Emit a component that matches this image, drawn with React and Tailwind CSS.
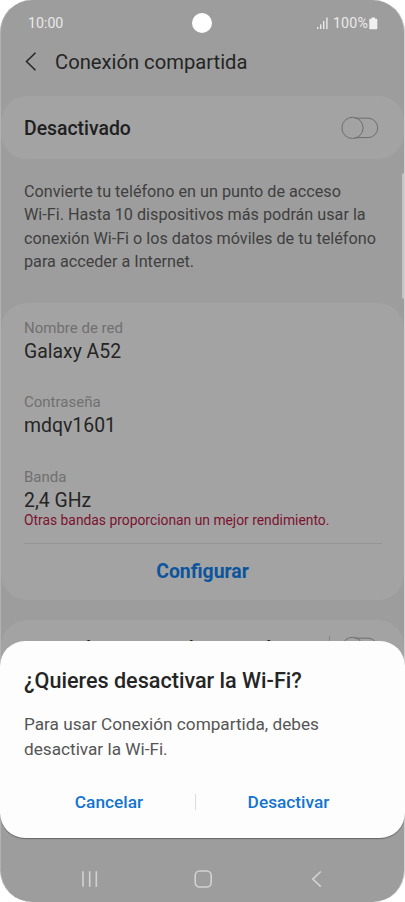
import clsx from 'clsx'

const fields = [
  { label: 'Nombre de red', value: 'Galaxy A52' },
  { label: 'Contraseña', value: 'mdqv1601' },
  { label: 'Banda', value: '2,4 GHz' },
]

function Toggle() {
  return (
    <svg width="38" height="24" viewBox="0 0 38 24" fill="none" stroke="#6e6e6e" strokeWidth="1" className="mr-px">
      <path d="M14 2.2H27a9.7 9.7 0 0 1 0 19.4H14" />
      <circle cx="11.5" cy="11.9" r="10.6" />
    </svg>
  )
}

function StatusBar() {
  return (
    <div className="relative h-[46px] shrink-0 flex items-center justify-between pl-[27px] pt-px pr-[26px] text-[14.200px] text-[#e9e9e9]">
      <span>10:00</span>
      <div className="absolute left-[191px] top-[13px] w-5 h-5 rounded-full bg-white" />
      <div className="flex items-center">
        <svg width="12" height="12" viewBox="0 0 12 12" fill="#e9e9e9" className="mr-[4px]">
          <rect x="0" y="10" width="1.4" height="2" />
          <rect x="3" y="7.4" width="1.4" height="4.6" />
          <rect x="6" y="4" width="1.4" height="8" />
          <rect x="9.2" y="0.5" width="1.4" height="11.5" />
        </svg>
        <span className="pt-px tracking-[0.2px]">100%</span>
        <svg width="9" height="13" viewBox="0 0 9 13" fill="#f0f0f0" className="ml-px">
          <path d="M2.6 0.4h3.4v1.3h1.5q.8 0 .8.8v9q0 .8-.8.8h-6.400q-.8 0-.8-.8v-9q0-.8.8-.8h1.500z" />
        </svg>
      </div>
    </div>
  )
}

function Card({ className, children }) {
  return <div className={clsx('shrink-0 rounded-[26px] bg-[#a3a3a3] pl-[23px]', className)}>{children}</div>
}

function Dialog() {
  return (
    <div className="absolute inset-x-0 top-[641px] h-[197px] rounded-[25px] bg-[#fdfdfd] pl-6 pt-[27px] shadow-[0_1px_1px_rgba(0,0,0,0.35)]">
      <h2 className="text-[21.600px] leading-[26px] font-medium text-[#252525] whitespace-nowrap">¿Quieres desactivar la Wi-Fi?</h2>
      <p className="mt-[18px] text-[17.200px] leading-[25px] text-[#555]">
        Para usar Conexión compartida, debes<br />desactivar la Wi-Fi.
      </p>
      <div className="mt-[28px] flex items-center h-6 text-[17.300px] font-medium text-[#1374d0]">
        <button className="w-[171px] pr-px pt-px text-center">Cancelar</button>
        <span className="w-px h-4 bg-[#dcdcdc]" />
        <button className="w-[185px] pt-px text-center">Desactivar</button>
      </div>
    </div>
  )
}

function NavBar() {
  return (
    <div className="absolute inset-x-0 bottom-0 h-[46px] flex items-center">
      <svg width="405" height="46" viewBox="0 0 405 46" fill="none" stroke="#d2d2d2" strokeWidth="1.6">
        <path d="M83 15.200v15.600M89.700 15.200v15.600M96.300 15.200v15.600" />
        <rect x="195.200" y="15" width="16" height="16" rx="4.500" />
        <path d="M320.800 15.500l-8 7.600 8 7.600" />
      </svg>
    </div>
  )
}

export default function App() {
  return (
    <div className="w-[405px] h-[902px] bg-white font-['Roboto',sans-serif]">
      <div className="relative w-[405px] h-[902px] rounded-[32px] overflow-hidden bg-[#9d9d9d] border-x border-l-[#b2b2b2] border-r-[#d0d0d0] flex flex-col">
        <StatusBar />

        <div className="h-[50px] shrink-0 flex items-start pl-6 pt-[3px]">
          <svg width="12" height="20" viewBox="0 0 12 20" fill="none" stroke="#252525" strokeWidth="1.500" className="mt-[2px]">
            <path d="M10.500 1.700L1.500 10.500l9 8.700" />
          </svg>
          <h1 className="ml-[18px] text-[20.200px] leading-[26px] text-[#252525]">Conexión compartida</h1>
        </div>

        <Card className="h-[63px] pr-6 flex items-center justify-between">
          <span className="pt-[3px] text-[19.400px] font-medium text-[#202020]">Desactivado</span>
          <Toggle />
        </Card>

        <p className="h-[144px] shrink-0 pl-[23px] pt-[21px] text-[16.200px] leading-[23.300px] text-[#404040]">
          Convierte tu teléfono en un punto de acceso<br />
          Wi-Fi. Hasta 10 dispositivos más podrán usar la<br />
          conexión Wi-Fi o los datos móviles de tu teléfono<br />
          para acceder a Internet.
        </p>

        <Card className="h-[297px] pt-[15px] pr-[22px]">
          {fields.map((f) => (
            <div key={f.label} className="h-[74.400px]">
              <p className="text-[15px] leading-[20px] text-[#707070]">{f.label}</p>
              <p className="pt-px text-[19.400px] leading-[26px] text-[#252525]">{f.value}</p>
              {f.label === 'Banda' && (
                <p className="-mt-[3px] text-[13.850px] leading-[18px] text-[#7b1230] whitespace-nowrap">
                  Otras bandas proporcionan un mejor rendimiento.
                </p>
              )}
            </div>
          ))}
          <div className="mt-[2px] h-px bg-[#959595]" />
          <button className="w-full mt-[15px] pr-px text-center text-[19.400px] leading-[26px] font-bold text-[#0c549d]">Configurar</button>
        </Card>

        <Card className="mt-5 h-[80px] pr-6 flex items-start pt-4">
          <span className="flex-1 text-[18.800px] leading-6 font-medium text-[#202020] whitespace-nowrap">
            Conexión compartida automática
          </span>
          <span className="mr-[11px] w-px h-6 bg-[#858585]" />
          <Toggle />
        </Card>

        {/* scrollbar */}
        <div className="absolute right-0 top-[173px] w-[2px] h-[126px] rounded-l-sm bg-[#c4c4c4]" />
      </div>

      <div className="absolute left-0 top-0 w-[405px] h-[902px]">
        <Dialog />
        <NavBar />
      </div>
    </div>
  )
}
